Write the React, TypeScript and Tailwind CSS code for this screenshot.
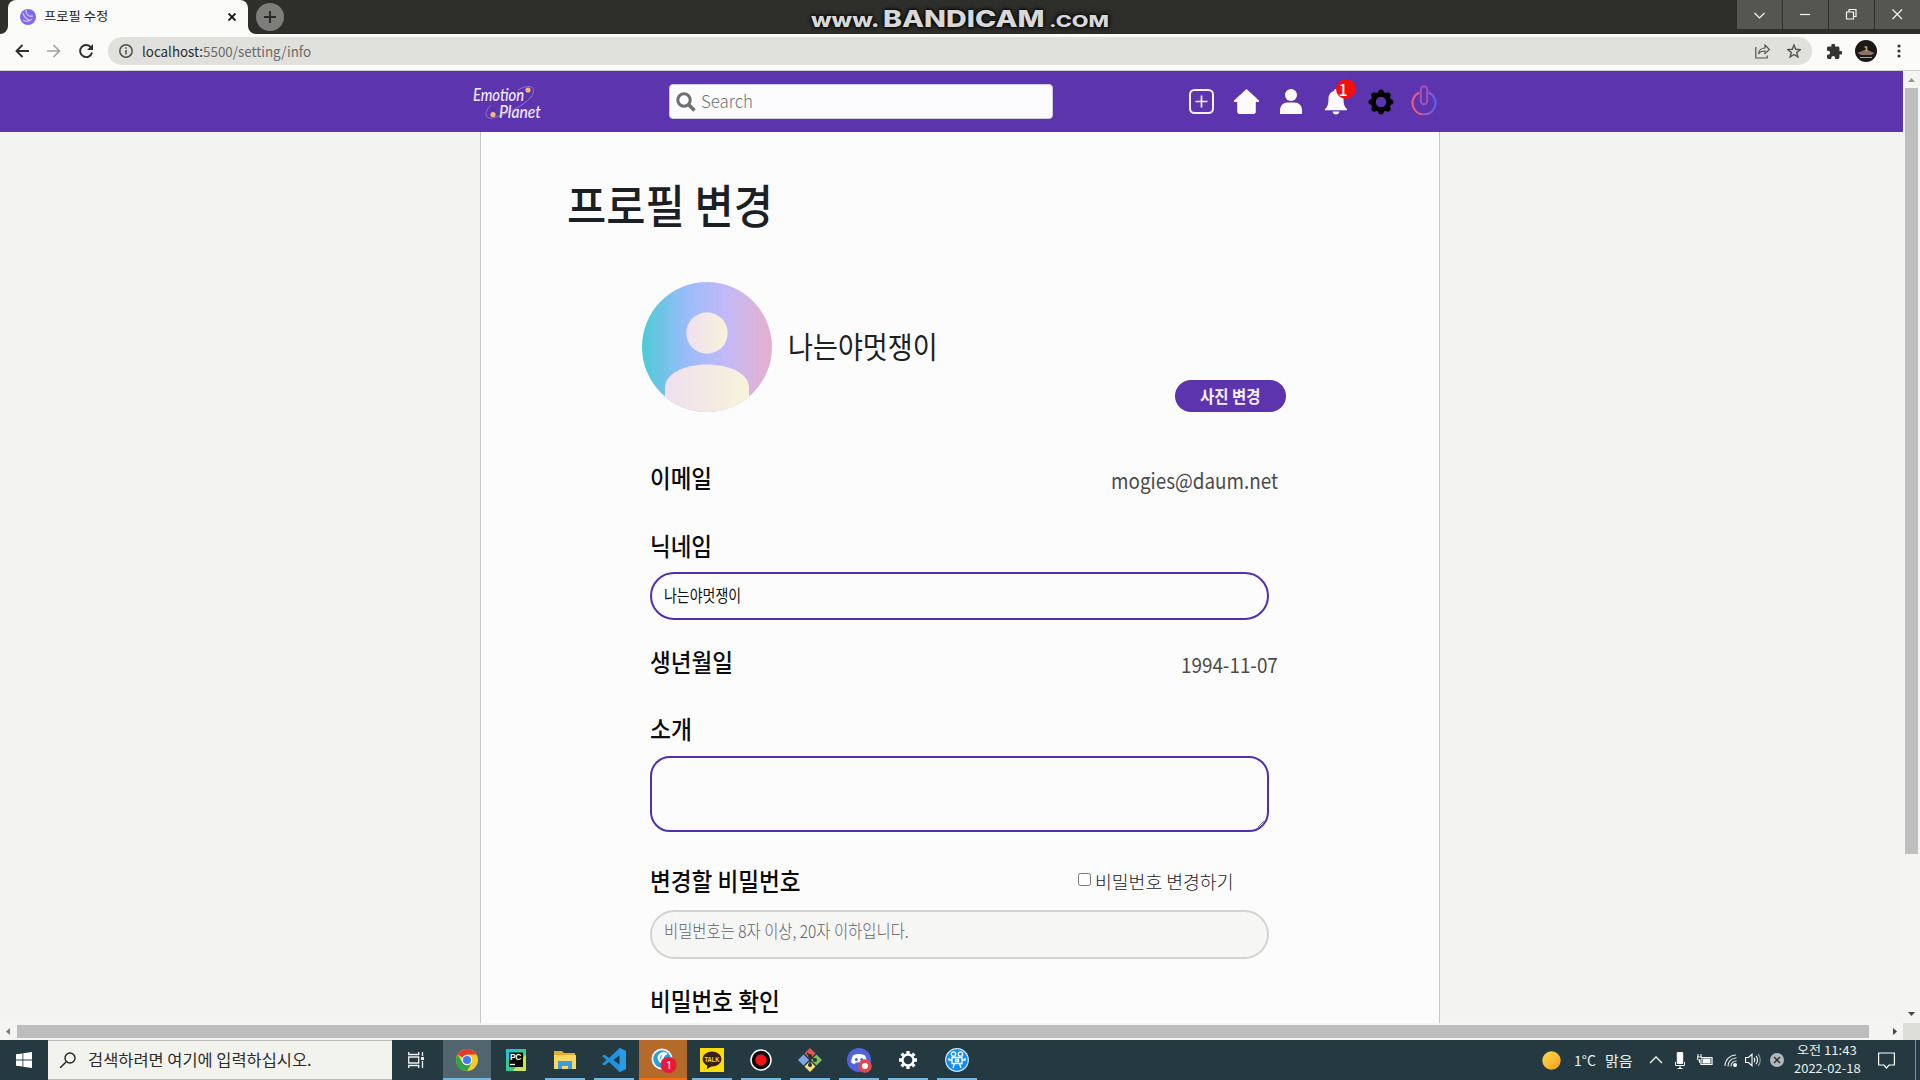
import { useLayoutEffect, useRef, useState, type ReactNode } from "react";

/* Text squeezed or stretched horizontally so that it fills a given width. */
function Fit({ w, className = "", children }: { w: number; className?: string; children: ReactNode }) {
  const ref = useRef<HTMLSpanElement>(null);
  const [scale, setScale] = useState(1);
  useLayoutEffect(() => {
    if (ref.current) setScale(w / ref.current.offsetWidth);
  }, [w]);
  return (
    <span className={"block shrink-0 whitespace-nowrap " + className} style={{ width: w }}>
      <span ref={ref} className="inline-block origin-left" style={{ transform: `scaleX(${scale})` }}>
        {children}
      </span>
    </span>
  );
}

function TitleBar() {
  return (
    <header className="flex h-[34px] bg-[#2e2e2b]">
      <div className="flex h-full w-2 items-end bg-[#fbfbfa]">
        <div className="h-full w-full rounded-br-lg bg-[#2e2e2b]" />
      </div>
      <div className="flex h-full w-60 items-center rounded-t-lg bg-[#fbfbfa] pl-3">
        <svg className="size-4" viewBox="0 0 16 16">
          <circle cx="8" cy="8" r="8" fill="#8168e8" />
          <path d="M3 4c1 4 3 6 7 8M6 1c0 4 2 7 7 6M3 11c3 2 6 2 9-1" stroke="#cdb9f8" strokeWidth="1.400" fill="none" />
        </svg>
        <Fit w={64} className="-mt-0.5 ml-2 text-[12.5px] leading-4 text-[#222]">프로필 수정</Fit>
        <svg className="ml-auto mr-3 size-2" viewBox="0 0 8 8" stroke="#161616" strokeWidth="1.900">
          <path d="M.5 .5l7 7M7.500 .5l-7 7" />
        </svg>
      </div>
      <div className="flex h-full w-2 bg-[#fbfbfa]">
        <div className="h-full w-full rounded-bl-lg bg-[#2e2e2b]" />
      </div>
      <div className="mt-[3px] flex size-7 items-center justify-center rounded-full bg-[#7d7d7b]">
        <svg className="size-3" viewBox="0 0 12 12" stroke="#2b2b2b" strokeWidth="2">
          <path d="M6 0v12M0 6h12" />
        </svg>
      </div>
      <div className="ml-[527px] flex h-[34px] items-end font-['Inter'] font-extrabold leading-none text-[#d8d8d8] [text-shadow:0_0_3px_#000,0_0_5px_#000]">
        <Fit w={68} className="pb-[4px] text-[20px]">www.</Fit>
        <Fit w={162} className="ml-1 pb-[3px] text-[23px]">BANDICAM</Fit>
        <Fit w={60} className="ml-1 pb-[5px] text-[15.5px]">.COM</Fit>
      </div>
      <div className="ml-auto flex h-[29px] gap-px">
        <WinButton><path d="M1.500 5l5 5 5-5" /></WinButton>
        <WinButton><path d="M1 6.500h10" /></WinButton>
        <WinButton><path d="M1.500 4h7v7h-7zM4 4V1.500h7v7H8.500" /></WinButton>
        <WinButton><path d="M1.500 1.500l9.500 9.500M11 1.500l-9.500 9.500" /></WinButton>
      </div>
    </header>
  );
}

function WinButton({ children }: { children: ReactNode }) {
  return (
    <span className="flex w-[45px] items-center justify-center bg-[#555552]">
      <svg className="size-[13px]" viewBox="0 0 13 13" fill="none" stroke="#f4f4f4" strokeWidth="1.200">{children}</svg>
    </span>
  );
}

function AddressBar() {
  return (
    <div className="flex h-[37px] items-center border-b border-[#cfcfcf] bg-[#fbfbfa] pb-0.5">
      <svg className="ml-[15px] size-3.5" viewBox="0 0 14 14" fill="none" stroke="#2f2f2f" strokeWidth="1.900"><path d="M14 7H1.500M7.500 1L1.500 7l6 6" /></svg>
      <svg className="ml-[18px] size-3.5" viewBox="0 0 14 14" fill="none" stroke="#a3a3a3" strokeWidth="1.700"><path d="M0 7h12.500M6.500 1l6 6-6 6" /></svg>
      <svg className="ml-[18px] size-3.5" viewBox="0 0 14 14" fill="none" stroke="#2f2f2f" strokeWidth="1.900"><path d="M12 3.500A6 6 0 1 0 13 8.500" /><path d="M14 0v6H8z" fill="#2f2f2f" stroke="none" /></svg>
      <div className="ml-[15px] flex h-7 w-[1704px] items-center rounded-full bg-[#e0e0dc] pl-[11px]">
        <svg className="size-3.5" viewBox="0 0 14 14" fill="none" stroke="#4e4e4e" strokeWidth="1.500"><circle cx="7" cy="7" r="6.200" /><path d="M7 6v4.500M7 3.200v1.600" /></svg>
        <Fit w={169} className="ml-[9px] text-[14px] leading-5 text-[#6a6a66]"><span className="text-[#2c2c2a]">localhost:</span>5500/setting/info</Fit>
        <svg className="ml-auto size-[15px]" viewBox="0 0 15 15" fill="none" stroke="#55554f" strokeWidth="1.200"><path d="M.8 3v11h11.400v-2.500" /><path d="M3.500 10c.5-4 3-6 6.500-6V1l4.500 4.500L10 9.500V7c-3 0-5 .5-6.500 3z" /></svg>
        <svg className="ml-[17px] mr-[11px] size-3.5" viewBox="0 0 14 14" fill="none" stroke="#55554f" strokeWidth="1.400"><path d="M7 1l1.700 4.300 4.600.3-3.600 2.900 1.200 4.500L7 10.500 3.100 13l1.200-4.500L.7 5.600l4.600-.3z" /></svg>
      </div>
      <svg className="ml-[15px] size-[15px]" viewBox="2 1.500 20.500 20.500" fill="#343432"><path d="M20.500 11H19V7a2 2 0 0 0-2-2h-4V3.500a2.500 2.500 0 0 0-5 0V5H4a2 2 0 0 0-2 2v3.800h1.500a2.700 2.700 0 0 1 0 5.400H2V20a2 2 0 0 0 2 2h3.800v-1.500a2.700 2.700 0 0 1 5.400 0V22H17a2 2 0 0 0 2-2v-4h1.500a2.500 2.500 0 0 0 0-5z" /></svg>
      <svg className="ml-[13px] size-[22px]" viewBox="0 0 22 22"><circle cx="11" cy="11" r="11" fill="#1b1817" /><path d="M2.500 13l7-3h3l7 3-3 2H6z" fill="#8a7466" /><path d="M5 17.500h12" stroke="#b0a8a0" /><path d="M9.500 7h2v4" stroke="#d9a45c" strokeWidth="1.500" fill="none" /></svg>
      <svg className="ml-5 h-3.5 w-1" viewBox="0 0 4 14" fill="#343432"><circle cx="2" cy="2" r="1.600" /><circle cx="2" cy="7" r="1.600" /><circle cx="2" cy="12" r="1.600" /></svg>
    </div>
  );
}

function Logo() {
  return (
    <svg className="h-9 w-[72px]" viewBox="0 0 72 36" fill="#f4ebff">
      <path d="M46 6C58-1 66 3 59 13 52 22 32 31 21 34 12 35 12 28 19 21" fill="none" stroke="#9076d0" strokeWidth="1" />
      <text x="1" y="16.500" textLength="51" lengthAdjust="spacingAndGlyphs" fontFamily="Lato, sans-serif" fontStyle="italic" fontWeight="500" fontSize="17">Emotion</text>
      <text x="27" y="34" textLength="42" lengthAdjust="spacingAndGlyphs" fontFamily="Lato, sans-serif" fontStyle="italic" fontWeight="500" fontSize="17">Planet</text>
      <circle cx="56" cy="6" r="2.600" fill="#f8b877" />
      <circle cx="21" cy="30.500" r="2.600" fill="#f8b877" />
    </svg>
  );
}

function SiteNav() {
  return (
    <nav className="flex h-[61px] items-center bg-[#5c34ae] pl-[472px]">
      <Logo />
      <div className="ml-[125px] flex h-[35px] w-[384px] items-center rounded-[4px] border border-[#cfc8e4] bg-[#fcfcfe] pl-1.5">
        <svg className="size-5" viewBox="0 0 20 20" fill="none" stroke="#707070" strokeWidth="3"><circle cx="8" cy="8" r="6.200" /><path d="M12.500 12.500l6 6" strokeWidth="3.600" /></svg>
        <Fit w={52} className="-mt-0.5 ml-[5px] text-[17.5px] font-light leading-6 text-[#6d7378]">Search</Fit>
      </div>
      <svg className="ml-[136px] size-[25px]" viewBox="0 0 25 25" fill="none" stroke="#f4efff"><rect x="1" y="1" width="23" height="23" rx="4.500" strokeWidth="2" /><path d="M12.500 6.500v12M6.500 12.500h12" strokeWidth="1.700" /></svg>
      <svg className="ml-5 size-[25px]" viewBox="0 0 25 25" fill="#fcfcfe"><path d="M12.500 0L0 11.500V13h3.200v10.500L4.700 25h15.600l1.500-1.500V13H25v-1.500z" /></svg>
      <svg className="ml-[21px] h-[25px] w-[22px]" viewBox="0 0 22 25" fill="#fcfcfe"><circle cx="11" cy="6" r="6" /><path d="M0 25v-3.500c0-5 3.200-8 7.500-8h7c4.300 0 7.500 3 7.500 8V25z" /></svg>
      <div className="relative ml-[23px]">
        <svg className="h-[26px] w-[22px]" viewBox="0 0 22 26" fill="#fcfcfe"><path d="M11 0c-1.400 0-2 .8-2 2-3.700 1-5.500 4-5.500 8 0 5-1 8.200-3.500 10v1.300h22V20c-2.500-1.800-3.500-5-3.500-10 0-4-1.800-7-5.500-8 0-1.200-.6-2-2-2zM7.500 22.500h7c-.5 4-6.500 4-7 0z" /></svg>
        <span className="absolute left-[11px] top-[-10px] flex size-5 items-center justify-center rounded-full bg-[#f60d0d] text-[16px] font-medium leading-none text-white"><span className="-translate-x-[3px]">1</span></span>
      </div>
      <svg className="ml-[21px] size-[26px]" viewBox="-13 -13 26 26">
        <circle r="7.700" fill="none" stroke="#000" strokeWidth="5" />
        <g stroke="#000" strokeWidth="5.500" strokeLinecap="round">
          <path d="M0-9.700V-9M0 9.700V9M-9.700 0H-9M9.700 0H9M-6.900-6.900l.5.500M6.900-6.900l-.5.500M-6.900 6.900l.5-.5M6.900 6.900l-.5-.5" />
        </g>
      </svg>
      <svg className="ml-[17px] h-[30px] w-[26px] -translate-y-0.5" viewBox="0 0 26 30" fill="none" strokeLinecap="round">
        <defs><linearGradient id="power" x2="1"><stop offset="0" stopColor="#ef5a70" /><stop offset=".5" stopColor="#b65bb5" /><stop offset="1" stopColor="#5962ed" /></linearGradient></defs>
        <path d="M7.500 8A11.500 11.500 0 1 0 18.500 8" stroke="url(#power)" strokeWidth="2.200" />
        <rect x="9.800" y="1.200" width="6.400" height="18" rx="3.200" stroke="#a653b7" strokeWidth="2" />
      </svg>
    </nav>
  );
}

function Avatar() {
  return (
    <svg className="size-[130px] shrink-0" viewBox="0 0 130 130">
      <defs>
        <linearGradient id="sky" x2="1"><stop offset="0" stopColor="#4bcbd6" /><stop offset=".35" stopColor="#9bbcfa" /><stop offset=".65" stopColor="#c3b9f8" /><stop offset="1" stopColor="#e6b0cc" /></linearGradient>
        <linearGradient id="skin" x2="1"><stop offset="0" stopColor="#efdff0" /><stop offset="1" stopColor="#f8f3da" /></linearGradient>
        <clipPath id="round"><circle cx="65" cy="65" r="65" /></clipPath>
      </defs>
      <g clipPath="url(#round)">
        <path d="M0 0h130v130H0z" fill="url(#sky)" />
        <circle cx="65" cy="51" r="20.700" fill="url(#skin)" />
        <path d="M23 130v-24C23 91 43 82.500 65 82.500S107 91 107 106v24z" fill="url(#skin)" />
      </g>
    </svg>
  );
}

const label = "h-[30px] text-[25px] font-medium leading-[26px] text-[#0c0c0e]";

function ProfileForm() {
  return (
    <main className="ml-[480px] h-full w-[960px] overflow-hidden border-x border-[#c6c6c6] bg-[#fcfcfc]">
      <h1 className="mt-[51px] h-12 pl-[86px] text-[46px] font-medium leading-[40px] text-[#1c2024]"><Fit w={206}>프로필 변경</Fit></h1>
      <div className="ml-[161px] mt-[51px] flex w-[644px] items-center">
        <Avatar />
        <Fit w={150} className="ml-4 mb-[5px] text-[30px] leading-9 text-[#1c2024]">나는야멋쟁이</Fit>
        <button className="ml-auto flex h-8 w-[111px] items-center justify-center self-end rounded-full bg-[#5c34ae] pb-px pr-0.5 text-[17px] font-bold leading-6 text-[#f6f0ff]"><Fit w={60}>사진 변경</Fit></button>
      </div>
      <div className="ml-[169px] mt-[52px] flex w-[628px] flex-col">
        <div className="flex h-[30px] justify-between">
          <Fit w={62} className={label}>이메일</Fit>
          <Fit w={167} className="pt-px text-[21px] leading-[30px] text-[#4a4a4a]">mogies@daum.net</Fit>
        </div>
        <Fit w={62} className={"mt-[38px] " + label}>닉네임</Fit>
        <div className="mt-2.5 flex h-12 w-[619px] items-center rounded-3xl border-2 border-[#5230ad] pb-0.5 pl-3 text-[16.5px] leading-6 text-[#101010]"><Fit w={77}>나는야멋쟁이</Fit></div>
        <div className="mt-7 flex h-[30px] justify-between">
          <Fit w={83} className={label}>생년월일</Fit>
          <Fit w={97} className="pt-px text-[21px] leading-[30px] text-[#4a4a4a]">1994-11-07</Fit>
        </div>
        <Fit w={42} className={"mt-[37px] " + label}>소개</Fit>
        <div className="mt-[11px] flex h-[76px] w-[619px] items-end justify-end rounded-[20px] border-2 border-[#5230ad]">
          <svg className="size-2.5" viewBox="0 0 10 10" stroke="#666" strokeWidth=".8"><path d="M1 7l6-6M4 7l3-3" /></svg>
        </div>
        <div className="mt-[35px] flex h-[30px] items-center">
          <Fit w={151} className={label}>변경할 비밀번호</Fit>
          <span className="mb-[5px] ml-[277px] size-[13px] rounded-[2.5px] border border-[#777] bg-white" />
          <Fit w={138} className="mb-0.5 ml-1 text-[18px] font-light leading-6 text-[#1c2024]">비밀번호 변경하기</Fit>
        </div>
        <div className="mt-[13px] flex h-[49px] w-[619px] items-center rounded-[25px] border-2 border-[#d3d3d2] bg-[#f6f6f5] pb-2.5 pl-3 text-[18px] font-light leading-6 text-[#626266]"><Fit w={245}>비밀번호는 8자 이상, 20자 이하입니다.</Fit></div>
        <Fit w={130} className={"mt-7 " + label}>비밀번호 확인</Fit>
      </div>
    </main>
  );
}

function TaskSlot({ children, className = "", bar = "bg-[#76b9e0]" }: { children: ReactNode; className?: string; bar?: string }) {
  return (
    <div className={"flex h-10 w-12 flex-col items-center " + className}>
      <div className="flex h-[38px] w-full items-center justify-center pt-0.5">
        <svg className="size-6 overflow-visible" viewBox="0 0 24 24" fill="none">{children}</svg>
      </div>
      <div className={"h-0.5 " + (className ? "w-full " : "w-10 ") + bar} />
    </div>
  );
}

function Taskbar() {
  return (
    <footer className="flex h-10 items-center bg-[#253a40] text-[#ecf0f0]">
      <div className="flex w-12 justify-center">
        <svg className="size-4" viewBox="0 0 16 16" fill="#fff"><path d="M0 2.300L6.500 1.400v6.200H0zM7.300 1.200L16 0v7.600H7.300zM0 8.400h6.500v6.200L0 13.700zM7.300 8.400H16V16l-8.700-1.200z" /></svg>
      </div>
      <div className="flex h-10 w-[344px] items-center border-y border-[#b8b8b8] bg-[#f3f3ee] pl-3">
        <svg className="size-4" viewBox="0 0 16 16" fill="none" stroke="#222" strokeWidth="1.400"><circle cx="10" cy="6" r="5" /><path d="M6.500 9.500L0 16" /></svg>
        <Fit w={224} className="mb-0.5 ml-3 text-[16px] leading-6 text-[#2c2c2c]">검색하려면 여기에 입력하십시오.</Fit>
      </div>
      <div className="flex w-[51px] justify-center pr-0.5">
        <svg className="h-4 w-[17px]" viewBox="0 0 17 16" fill="none" stroke="#eee" strokeWidth="1.300"><path d="M.7 0v2.500h10V0M.7 16v-2.500h10V16M.7 5h10v6h-10zM14.500 0v4M14.500 9v7" /><path d="M13 5h3v3h-3z" fill="#eee" stroke="none" /></svg>
      </div>
      <div className="flex gap-px">
        <TaskSlot className="bg-[#50656d]">
          <circle cx="12" cy="12" r="11" fill="#fbc924" />
          <path d="M12 12L2.500 6.500A11 11 0 0 1 21.500 6.500H12z" fill="#e33b2e" />
          <path d="M2.500 6.500A11 11 0 0 0 12 23l4.500-8L12 12 7.500 15z" fill="#2da24f" />
          <circle cx="12" cy="12" r="5.200" fill="#fff" /><circle cx="12" cy="12" r="4.100" fill="#3f7de8" />
        </TaskSlot>
        <TaskSlot bar="bg-transparent">
          <path d="M2 1h20v22H2z" fill="#36c98f" /><path d="M2 1h12L2 12z" fill="#20c5ce" /><path d="M22 6v17H9z" fill="#c9e354" /><path d="M5 4.500h14v14.500H5z" fill="#0a0a0a" />
          <text x="6" y="12" fontSize="8.500" fontWeight="700" fill="#fff" textLength="11.500" fontFamily="Liberation Sans">PC</text><path d="M6 16.500h5" stroke="#fff" strokeWidth="1.300" />
        </TaskSlot>
        <TaskSlot><path d="M1 3h8l2 2h11v16H1z" fill="#e5ad32" /><path d="M1 7h22v14H1z" fill="#fbd765" /><path d="M5 21v-8h14v8h-4v-3H9v3z" fill="#3d9be0" /></TaskSlot>
        <TaskSlot><path d="M17.500 0L24 3v18l-6.500 3L7 14l-4.500 3.500L0 16l4.500-4L0 8l2.500-1.500L7 10zM18 7l-6.500 5L18 17z" fill="#2292dc" fillRule="evenodd" /><path d="M17.500 0L24 3v18l-6.500 3z" fill="#279de9" /></TaskSlot>
        <TaskSlot className="bg-[#b36a2b]" bar="bg-[#f56f0a]">
          <circle cx="11" cy="11" r="10.500" fill="#e9f6fc" /><circle cx="11" cy="11" r="8.700" fill="#2d9fdc" /><path d="M16 6c-5-2-9 1-8 5s5 4 7 2M15 5c-2 2-4 3-4 7" stroke="#fff" strokeWidth="2.400" />
          <circle cx="17.500" cy="17" r="8" fill="#ea1736" /><text x="14.800" y="21" fontSize="11.500" fill="#fff" fontFamily="Noto Sans">1</text>
        </TaskSlot>
        <TaskSlot>
          <path d="M0 0h24v24H0z" fill="#fade0a" /><ellipse cx="12" cy="11" rx="9.500" ry="7.500" fill="#3c1e1e" /><path d="M7 16v5l5-3z" fill="#3c1e1e" />
          <text x="4.500" y="13.500" fontSize="6.500" fontWeight="700" fill="#fade0a" textLength="15" lengthAdjust="spacingAndGlyphs" fontFamily="Liberation Sans">TALK</text>
        </TaskSlot>
        <TaskSlot><circle cx="12" cy="12" r="10" fill="#080808" stroke="#fff" strokeWidth="1.500" /><circle cx="12" cy="12" r="5.700" fill="#f31313" /></TaskSlot>
        <TaskSlot>
          <path d="M12 0l5.500 5.500L12 11 6.500 5.500z" fill="#e2574c" /><path d="M18.500 6.500L24 12l-5.500 5.500L13 12z" fill="#7cc15b" /><path d="M5.500 6.500L11 12l-5.500 5.500L0 12z" fill="#7da7e8" /><path d="M12 13l5.500 5.500L12 24l-5.500-5.500z" fill="#f8dc7a" />
          <path d="M9 5l3 3v9M12 8l5 4" stroke="#2b3030" strokeWidth="1.500" /><circle cx="12" cy="17" r="2" fill="#2b3030" /><circle cx="17" cy="12" r="2" fill="#2b3030" /><circle cx="12" cy="8" r="2" fill="#2b3030" />
        </TaskSlot>
        <TaskSlot>
          <circle cx="12" cy="12" r="12" fill="#5262df" /><path d="M6 7.500c3-2 9-2 12 0 1.300 2.500 1.800 4.500 1.800 7.200l-3.300 1.500-1.300-1.800H8.800l-1.300 1.800-3.300-1.500C4.200 12 4.700 10 6 7.500z" fill="#fff" /><circle cx="9.300" cy="11.500" r="1.500" fill="#5262df" /><circle cx="14.700" cy="11.500" r="1.500" fill="#5262df" />
          <circle cx="18" cy="18" r="6.800" fill="#e0494a" /><circle cx="18" cy="18" r="3" fill="#fff" />
        </TaskSlot>
        <TaskSlot>
          <circle cx="12" cy="12" r="5.500" stroke="#fff" strokeWidth="2.300" />
          <path d="M12 3v3M12 18v3M3 12h3M18 12h3M5.600 5.600l2 2M16.400 16.400l2 2M5.600 18.400l2-2M16.400 7.600l2-2" stroke="#fff" strokeWidth="3.300" />
        </TaskSlot>
        <TaskSlot>
          <circle cx="12" cy="12" r="11.300" fill="#128df0" stroke="#cfe9ff" strokeWidth="1.200" />
          <g stroke="#fff" strokeWidth="1.300"><circle cx="8.500" cy="6" r="2.200" /><circle cx="15.500" cy="6" r="2.200" /><path d="M7 9.500h10v6H7zM10.500 11.500h3v2h-3zM7 12H4v-2M17 12h3v-2M9.500 15.500L8 20M14.500 15.500L16 20" /></g>
        </TaskSlot>
      </div>
      <div className="ml-auto flex h-10 items-center">
        <svg className="mr-0.5 size-[19px]" viewBox="0 0 19 19"><defs><linearGradient id="sun" x2="1" y2="1"><stop stopColor="#ffdb50" /><stop offset="1" stopColor="#f79d1c" /></linearGradient></defs><circle cx="9.500" cy="9.500" r="9.200" fill="url(#sun)" /></svg>
        <Fit w={22} className="ml-[11px] text-[14px] leading-5">1°C</Fit>
        <Fit w={28} className="ml-[9px] text-[14px] leading-5">맑음</Fit>
        <svg className="ml-4 h-2 w-3.5" viewBox="0 0 14 8" fill="none" stroke="#fff" strokeWidth="1.300"><path d="M1 7l6-6 6 6" /></svg>
        <svg className="ml-3 h-[17px] w-2.5" viewBox="0 0 10 17"><rect x="1.800" width="6.400" height="12" rx="1" fill="#fff" /><path d="M.5 10v3.500h9V10M5 13v3.500M2.500 16.500h5" fill="none" stroke="#fff" /></svg>
        <svg className="ml-3 h-3 w-4" viewBox="0 0 16 12" fill="none" stroke="#fff"><path d="M5 3.500h10v7H4V7" strokeWidth="1.200" /><path d="M6.500 4.500h7v5h-8V7z" fill="#fff" stroke="none" /><path d="M1 0v3M4 0v3M0 3h5v3H1zM2.500 6v3" /></svg>
        <svg className="ml-[11px] size-[13px]" viewBox="0 0 13 13" fill="none" stroke="#e0e5e5" strokeWidth="1.100"><path d="M1 12A11 11 0 0 1 12 1M4 12.500A8 8 0 0 1 12.500 4M7 12.500A5 5 0 0 1 12.500 7" /><circle cx="11" cy="11" r="1.500" fill="#fff" /></svg>
        <svg className="ml-2 h-3.5 w-4" viewBox="0 0 16 14" fill="none" stroke="#fff" strokeWidth="1.100"><path d="M.6 4.500h3L7 1.200v11.600L3.600 9.500h-3zM9 5c1 1 1 3 0 4M11 3c2 2 2 6 0 8" /><path d="M13 1c3 3 3 9 0 12" opacity=".5" /></svg>
        <svg className="ml-[9px] size-3.5" viewBox="0 0 14 14"><circle cx="7" cy="7" r="7" fill="#b5b8bb" /><path d="M4 4l6 6M10 4l-6 6" stroke="#273238" strokeWidth="1.500" /></svg>
        <div className="mb-0.5 ml-[9px] flex w-[68px] flex-col items-center text-[12px] leading-[18px]">
          <Fit w={60}>오전 11:43</Fit>
          <Fit w={67}>2022-02-18</Fit>
        </div>
        <svg className="ml-[17px] size-[17px]" viewBox="0 0 17 17" fill="none" stroke="#fff" strokeWidth="1.200"><path d="M.6 1h15.800v12H11l-2.500 3-2.500-3H.6z" /></svg>
        <div className="ml-5 mr-1 h-10 w-px bg-[#84918f]" />
      </div>
    </footer>
  );
}

export default function App() {
  return (
    <div className="flex h-[1080px] w-[1920px] flex-col overflow-hidden bg-[#f3f3f1] font-['Noto_Sans_CJK_KR','Noto_Sans',sans-serif]">
      <TitleBar />
      <AddressBar />
      <div className="flex h-[952px]">
        <div className="flex w-[1903px] flex-col">
          <SiteNav />
          <div className="h-[891px]"><ProfileForm /></div>
        </div>
        <div className="flex w-[17px] flex-col items-center bg-[#f4f4f2]">
          <svg className="mt-[7px] h-1 w-[7px]" viewBox="0 0 7 4" fill="#96968f"><path d="M3.500 0L7 4H0z" /></svg>
          <div className="mt-1.5 h-[766px] w-[13px] bg-[#bfbfc0]" />
          <svg className="mb-[7px] mt-auto h-1 w-[7px]" viewBox="0 0 7 4" fill="#454545"><path d="M0 0h7L3.500 4z" /></svg>
        </div>
      </div>
      <div className="flex h-[17px] items-center bg-[#f4f4f2]">
        <svg className="ml-1.5 h-[7px] w-1" viewBox="0 0 4 7" fill="#7b7b7b"><path d="M4 0v7L0 3.500z" /></svg>
        <div className="ml-[7px] h-[13px] w-[1852px] bg-[#bdbdbe]" />
        <svg className="ml-6 h-[7px] w-1" viewBox="0 0 4 7" fill="#454545"><path d="M0 0v7l4-3.500z" /></svg>
        <div className="ml-auto h-[17px] w-[17px] bg-[#deded9]" />
      </div>
      <Taskbar />
    </div>
  );
}
